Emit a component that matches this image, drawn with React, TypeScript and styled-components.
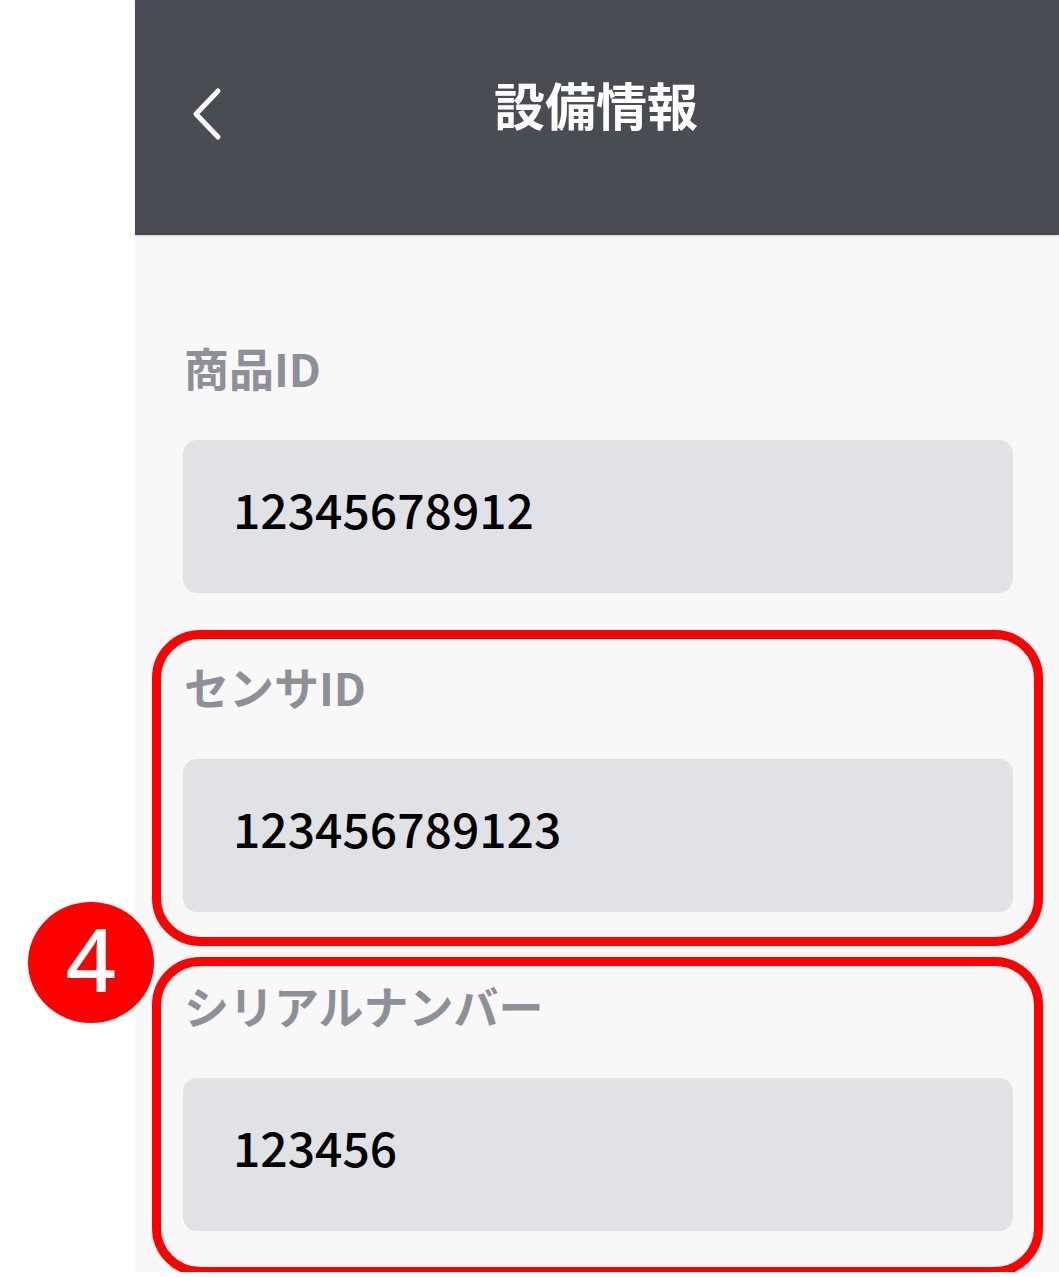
import React from "react";
import styled, { createGlobalStyle } from "styled-components";

const GlobalStyle = createGlobalStyle`
  html, body {
    margin: 0;
    padding: 0;
    background: #ffffff;
  }
  body {
    font-family: "Noto Sans CJK JP", "Noto Sans", sans-serif;
  }
`;

const Page = styled.div`
  display: flex;
  padding-left: 135px;
`;

const Screen = styled.div`
  display: flex;
  flex-direction: column;
  width: 924px;
  height: 1272px;
  background: #f8f8f8;
`;

const Header = styled.header`
  display: flex;
  align-items: center;
  justify-content: center;
  position: relative;
  height: 235px;
  padding-bottom: 26px;
  box-sizing: border-box;
  background: #4a4c54;
  box-shadow: 0 1px 2px rgba(0, 0, 0, 0.15);
`;

const BackButton = styled.button`
  position: absolute;
  left: 54px;
  top: 86px;
  width: 40px;
  height: 56px;
  padding: 0;
  border: none;
  background: transparent;
  display: flex;
  align-items: center;
  justify-content: center;
`;

const Title = styled.h1`
  margin: 0 0 0 -2px;
  color: #ffffff;
  font-size: 51px;
  font-weight: 700;
  line-height: 1;
`;

const Body = styled.main`
  display: flex;
  flex-direction: column;
  gap: 71px;
  padding: 110px 46px 0 48px;
`;

const Field = styled.section`
  position: relative;
  display: flex;
  flex-direction: column;
  gap: 50px;
`;

const Highlight = styled.div<{ $top: number; $bottom: number }>`
  position: absolute;
  left: -31px;
  right: -30px;
  top: ${(p) => -p.$top}px;
  bottom: ${(p) => -p.$bottom}px;
  border: 9px solid #ff0000;
  border-radius: 48px;
  pointer-events: none;
`;

const Badge = styled.div`
  position: absolute;
  left: -133px;
  top: -64px;
  width: 126px;
  height: 121px;
  padding-bottom: 10px;
  box-sizing: border-box;
  border-radius: 50%;
  background: #ff0000;
  color: #ffffff;
  display: flex;
  align-items: center;
  justify-content: center;
  font-family: "Noto Sans", "Liberation Sans", sans-serif;
  font-size: 88px;
  font-weight: 500;
  line-height: 1;
`;

const Label = styled.div`
  color: #8e9099;
  font-size: 45px;
  font-weight: 700;
  line-height: 1;
  padding-left: 1px;
`;

const Value = styled.div`
  display: flex;
  align-items: center;
  height: 153px;
  padding: 0 0 18px 50px;
  box-sizing: border-box;
  border-radius: 14px;
  background: #e1e2e5;
  color: #000000;
  font-size: 48px;
  font-weight: 500;
  line-height: 1;
`;

const Chevron = () => (
  <svg width="40" height="56" viewBox="0 0 40 56">
    <path
      d="M29 5 L7 28 L29 51"
      fill="none"
      stroke="#ffffff"
      strokeWidth="5"
      strokeLinecap="round"
      strokeLinejoin="round"
    />
  </svg>
);

const fields = [
  { label: "商品ID", value: "12345678912" },
  { label: "センサID", value: "123456789123", highlight: { top: 34, bottom: 34 } },
  {
    label: "シリアルナンバー",
    value: "123456",
    highlight: { top: 26, bottom: 45 },
    badge: "4",
  },
];

export default function App() {
  return (
    <Page>
      <GlobalStyle />
      <Screen>
        <Header>
          <BackButton aria-label="戻る">
            <Chevron />
          </BackButton>
          <Title>設備情報</Title>
        </Header>
        <Body>
          {fields.map((f) => (
            <Field key={f.label}>
              <Label>{f.label}</Label>
              <Value>{f.value}</Value>
              {f.highlight && (
                <Highlight $top={f.highlight.top} $bottom={f.highlight.bottom}>
                  {f.badge && <Badge>{f.badge}</Badge>}
                </Highlight>
              )}
            </Field>
          ))}
        </Body>
      </Screen>
    </Page>
  );
}
